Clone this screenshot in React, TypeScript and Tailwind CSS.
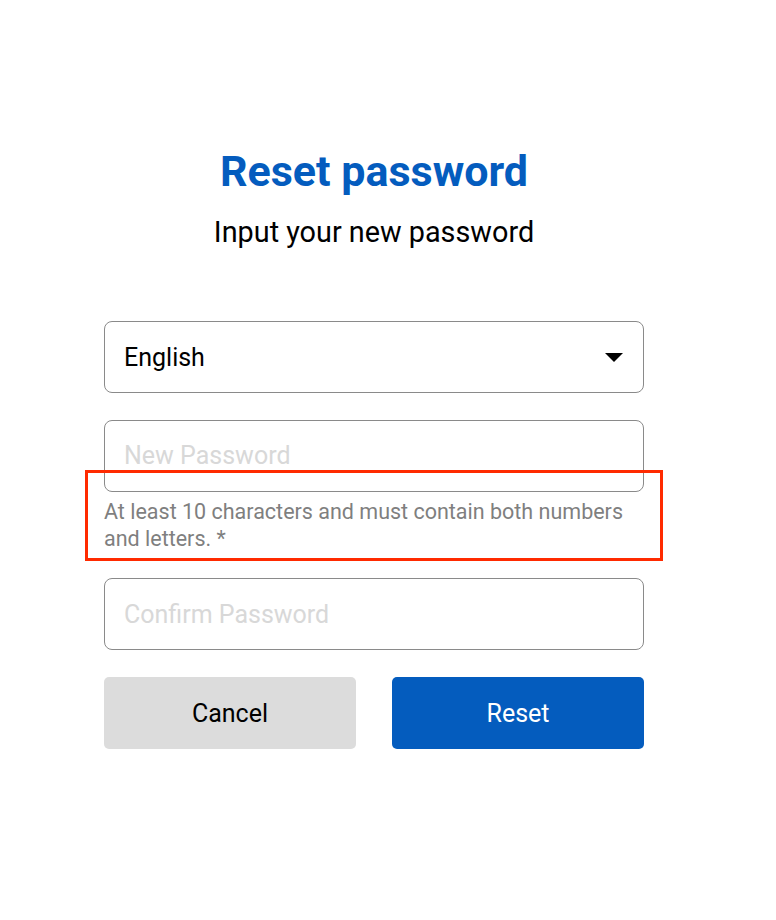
import React from "react";

export default function App() {
  return (
    <div className="relative min-h-[920px] w-[776px] bg-white" style={{ fontFamily: "Roboto, 'Noto Sans', sans-serif" }}>
      <div className="ml-[104px] flex w-[540px] flex-col pt-[147px]">
        <h1 className="whitespace-nowrap text-center text-[43px] font-bold leading-[48px] text-[#045cbe]">Reset password</h1>
        <p className="mt-[20px] whitespace-nowrap text-center text-[28.8px] leading-[34px] text-black">Input your new password</p>

        <div className="mt-[72px] flex h-[72px] items-center justify-between rounded-[8px] border border-[#8a8a8a] pl-[19px] pr-[20px]">
          <span className="pt-[2px] text-[25px] text-black">English</span>
          <svg width="18" height="9" viewBox="0 0 18 9">
            <polygon points="0,0 18,0 9,9" fill="#000" />
          </svg>
        </div>

        <div className="mt-[27px] flex h-[72px] items-center rounded-[8px] border border-[#8a8a8a] pl-[19px]">
          <span className="text-[25px] text-[#d8d8d8]">New Password</span>
        </div>
        <p className="mt-[6px] text-[21.5px] leading-[27px] text-[#7f7f7f]">
          At least 10 characters and must contain both numbers and letters. *
        </p>

        <div className="mt-[26px] flex h-[72px] items-center rounded-[8px] border border-[#8a8a8a] pl-[19px]">
          <span className="pt-[1px] text-[25px] text-[#d8d8d8]">Confirm Password</span>
        </div>

        <div className="mt-[27px] flex gap-[36px]">
          <button className="flex h-[72px] w-[252px] items-center justify-center rounded-[5px] bg-[#dcdcdc] pt-[1px] text-[25px] text-black">Cancel</button>
          <button className="flex h-[72px] w-[252px] items-center justify-center rounded-[5px] bg-[#045cbe] pt-[1px] text-[25px] text-white">Reset</button>
        </div>
      </div>

      <div className="absolute left-[85px] top-[470px] h-[91px] w-[578px] border-[3px] border-[#ff2a00]" />
    </div>
  );
}
